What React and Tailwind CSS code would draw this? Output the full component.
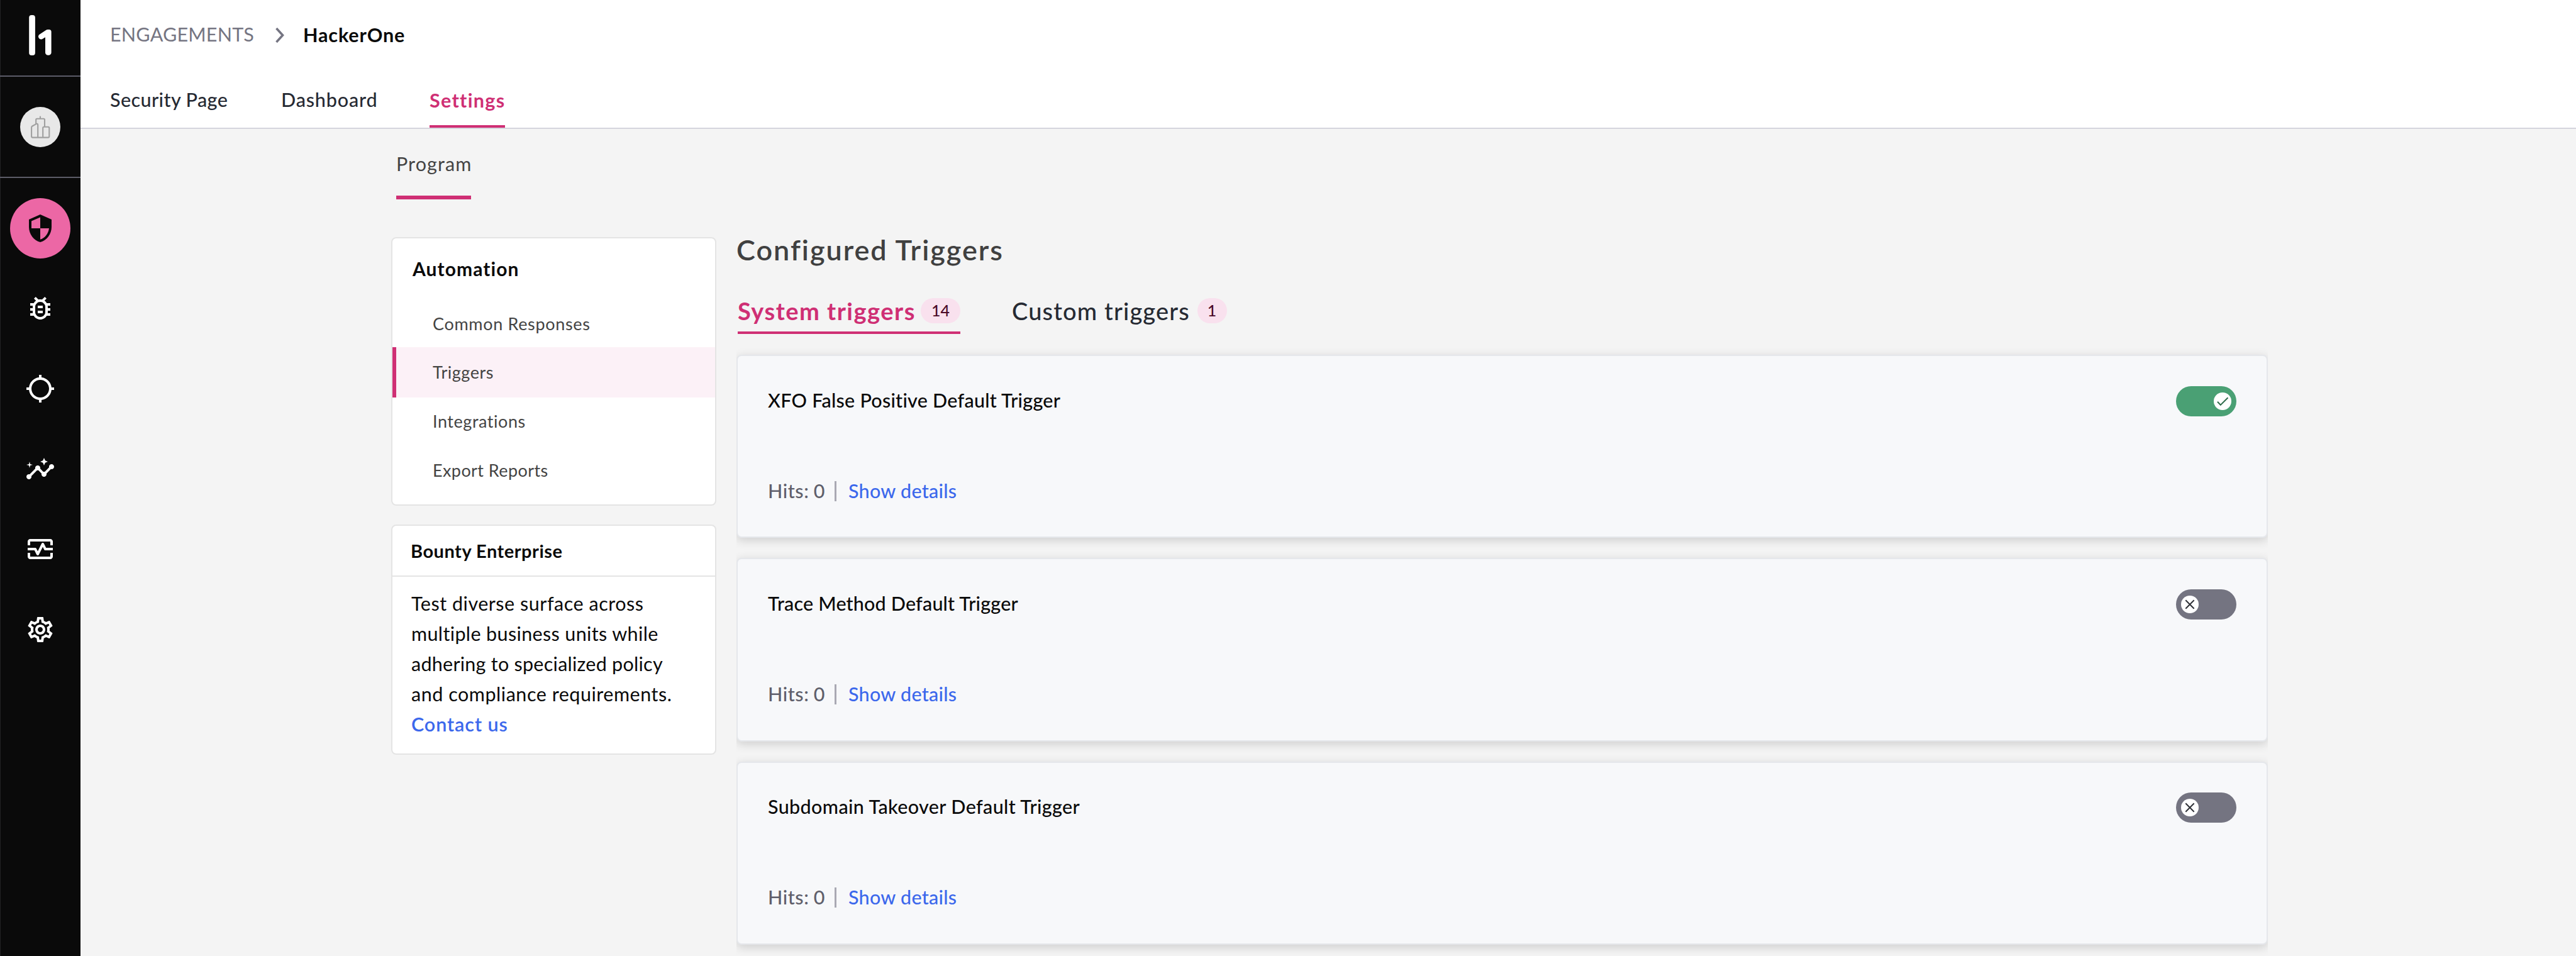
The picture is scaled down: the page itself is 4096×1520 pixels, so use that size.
import React from "react";
import {
  MdSecurity,
  MdOutlineBugReport,
  MdLocationSearching,
  MdInsights,
  MdOutlineMonitorHeart,
  MdOutlineSettings,
} from "react-icons/md";

const navIcons = [
  { name: "Engagements", Icon: MdSecurity, active: true },
  { name: "Reports", Icon: MdOutlineBugReport },
  { name: "Assets", Icon: MdLocationSearching },
  { name: "Insights", Icon: MdInsights },
  { name: "Monitoring", Icon: MdOutlineMonitorHeart },
  { name: "Settings", Icon: MdOutlineSettings },
];

const triggers = [
  { title: "XFO False Positive Default Trigger", hits: 0, on: true, spacing: "tracking-[0.25px]" },
  { title: "Trace Method Default Trigger", hits: 0, on: false, spacing: "tracking-[0.18px]" },
  { title: "Subdomain Takeover Default Trigger", hits: 0, on: false, spacing: "tracking-[0.37px]" },
];

function Logo() {
  return (
    <svg width="128" height="120" viewBox="0 0 128 120" fill="#fff">
      <rect x="46.2" y="23.9" width="9.7" height="64" rx="4" />
      <path d="M81.6 50.5V83.4a4.4 4.4 0 0 1-4.4 4.4h-.8a4.4 4.4 0 0 1-4.4-4.4V59.3l-4.6 2.6a4.4 4.4 0 0 1-5.8-1.6c-1.2-2-.6-4.3 1.2-5.5L73 47.9q1.4-1 3-1h2a3.6 3.6 0 0 1 3.6 3.6Z" />
    </svg>
  );
}

function Avatar() {
  return (
    <span className="flex size-16 rounded-full bg-[#e8e8e8]">
      <svg width="64" height="64" viewBox="0 0 64 64" fill="none" stroke="#a0a0a0" strokeWidth="2.1" strokeLinejoin="round" strokeLinecap="round">
        <path d="M32 15.5v3M25.2 27v-6.4a1.8 1.8 0 0 1 1.8-1.8h10.2a1.8 1.8 0 0 1 1.8 1.8V31" />
        <path d="M28.2 48.6V28.4a1.6 1.6 0 0 0-2.3-1.5L19.4 30.5a2.5 2.5 0 0 0-1.3 2.2V46.8a1.8 1.8 0 0 0 1.8 1.8H44.5a1.8 1.8 0 0 0 1.8-1.8V33.6a1.8 1.8 0 0 0-1.8-1.8H38a1.8 1.8 0 0 0-1.8 1.8V48.6" />
      </svg>
    </span>
  );
}

function Sidebar() {
  return (
    <aside className="flex w-32 shrink-0 flex-col border-l border-[#222224] bg-[#0a0a0a]">
      <div className="-ml-px h-[122px] border-b-2 border-[#5c5c68]">
        <Logo />
      </div>
      <div className="-ml-px flex h-[161px] items-center justify-center border-b-2 border-[#5c5c68]">
        <Avatar />
      </div>
      <nav className="-ml-px flex flex-col pt-4">
        {navIcons.map(({ name, Icon, active }) => (
          <a key={name} aria-label={name} className="flex h-[127.6px] items-center justify-center">
            <span
              className={
                active
                  ? "flex size-24 items-center justify-center rounded-full bg-[#ec67a5] text-[#0a0a0a]"
                  : "flex size-24 items-center justify-center text-white"
              }
            >
              <Icon className="size-12" />
            </span>
          </a>
        ))}
      </nav>
    </aside>
  );
}

function Header() {
  return (
    <header className="flex h-[205px] flex-col border-b-2 border-[#d5d5dd] bg-white pl-[47px]">
      <div className="flex h-[109px] items-center text-[30.5px]">
        <span className="w-[262px] text-[#757582] tracking-[0.22px]">ENGAGEMENTS</span>
        <svg className="mt-0.5" width="18" height="24" viewBox="0 0 18 24" fill="none" stroke="#757582" strokeWidth="3.6">
          <path d="M2.5 1l10 11-10 11" />
        </svg>
        <span className="ml-[27px] mt-0.5 font-bold text-[#0a0a0a] tracking-[0.87px]">HackerOne</span>
      </div>
      <nav className="flex h-[94px] gap-[84px] text-[30.5px] font-medium leading-[98px] text-[#262a33]">
        <a className="h-[94px] w-[188px] whitespace-nowrap tracking-[0.42px]">Security Page</a>
        <a className="h-[94px] w-[152px] tracking-[0.86px]">Dashboard</a>
        <a className="h-[94px] w-[120px] border-b-4 border-[#cf2f74] font-bold leading-[100px] text-[#cf2f74] tracking-[1.3px]">Settings</a>
      </nav>
    </header>
  );
}

function AutomationMenu() {
  return (
    <section className="h-[427px] rounded-lg border-2 border-[#e4e4e4] bg-white">
      <h2 className="flex h-[96.6px] items-center pl-8 text-[30px] font-bold text-[#0a0a0a] tracking-[1.07px]">Automation</h2>
      <ul className="text-[27px] leading-[77.75px] text-[#444444]">
        <li className="h-[77.75px] pl-16 tracking-[0.67px]">Common Responses</li>
        <li className="-my-px h-[79.75px] border-l-[6px] border-[#cf2f74] bg-[#fcf1f7] pl-[58px] leading-[79.75px] tracking-[0.52px]">Triggers</li>
        <li className="h-[77.75px] pl-16 tracking-[0.55px]">Integrations</li>
        <li className="h-[77.75px] pl-16 tracking-[0.41px]">Export Reports</li>
      </ul>
    </section>
  );
}

function PlanCard() {
  return (
    <section className="mt-[30px] h-[366px] rounded-lg border-2 border-[#e4e4e4] bg-white text-[#0a0a0a]">
      <h2 className="flex h-[81px] items-center border-b-2 border-[#e4e4e4] pl-[29px] text-[29px] font-bold tracking-[0.51px]">Bounty Enterprise</h2>
      <p className="flex flex-col pl-[30px] pt-[19px] text-[30.5px] leading-[47.86px]">
        <span className="tracking-[0.52px]">Test diverse surface across</span>
        <span className="tracking-[0.37px]">multiple business units while</span>
        <span className="tracking-[0.26px]">adhering to specialized policy</span>
        <span className="tracking-[0.53px]">and compliance requirements.</span>
        <a className="pt-px font-semibold text-[#3c68ec] tracking-[0.92px]">Contact us</a>
      </p>
    </section>
  );
}

function Toggle({ on }) {
  return (
    <span
      className={
        on
          ? "flex h-12 w-24 items-center justify-end rounded-full bg-[#4aa074] px-2"
          : "flex h-12 w-24 items-center rounded-full bg-[#747481] px-2"
      }
    >
      <span className="flex size-7 rounded-full bg-white">
        <svg width="28" height="28" viewBox="0 0 28 28" fill="none" strokeWidth="2">
          {on ? (
            <path d="M6 14.7l4.8 5.2L22.5 8.2" stroke="#2b6a48" />
          ) : (
            <path d="M7.3 7.3l13.4 13.4M20.7 7.3L7.3 20.7" stroke="#2e3036" />
          )}
        </svg>
      </span>
    </span>
  );
}

function TriggerCard({ title, hits, on, spacing }) {
  return (
    <article className="flex h-[291.1px] flex-col rounded-lg border-2 border-[#e5e7eb] bg-[#f7f8fa] px-12 pt-[47.5px] shadow-[0_4px_16px_rgba(0,0,0,0.16)]">
      <div className="flex h-12 items-center justify-between">
        <h3 className={`pb-0.5 text-[30.5px] font-medium text-[#0a0a0a] ${spacing}`}>{title}</h3>
        <Toggle on={on} />
      </div>
      <div className="mt-[94px] flex h-[50px] items-center text-[30.5px] font-medium">
        <span className="w-[106px] text-[#5f5f6b] tracking-[0.58px] [word-spacing:-1px]">Hits: {hits}</span>
        <span className="h-8 w-[3px] bg-[#a9a9b3]" />
        <a className="ml-[19px] text-[#3c68ec] tracking-[0.27px]">Show details</a>
      </div>
    </article>
  );
}

function Tabs() {
  return (
    <nav className="mt-11 flex h-[70px] gap-[82px] pl-0.5 text-[38px]">
      <a className="flex w-[354px] items-center justify-between border-b-4 border-[#cf2f74] font-bold text-[#cf2f74] tracking-[1.5px]">
        <span>System triggers</span>
        <span className="flex h-10 w-[63px] items-center justify-center rounded-full bg-[#f9e1ee] text-[25px] font-medium text-[#4b0a28] tracking-normal">14</span>
      </a>
      <a className="mb-1 flex w-[341.5px] items-center justify-between font-medium text-[#262a33] tracking-[1.14px]">
        <span>Custom triggers</span>
        <span className="flex h-10 w-[47px] items-center justify-center rounded-full bg-[#f9e1ee] text-[25px] font-medium text-[#4b0a28] tracking-normal">1</span>
      </a>
    </nav>
  );
}

export default function App() {
  return (
    <div className="flex h-[1520px] w-[4096px] overflow-hidden bg-[#f4f4f4] font-['Lato','Open_Sans',sans-serif]">
      <Sidebar />
      <div className="flex min-w-0 flex-1 flex-col">
        <Header />
        <main className="pl-[494px]">
          <div className="ml-2 flex h-[112px] w-[118.6px] items-center border-b-[6px] border-[#cf2f74] pt-[5px] text-[30.5px] text-[#444444] tracking-[1.09px]">Program</div>
          <div className="mt-[60px] flex gap-8">
            <aside className="w-[517px] shrink-0">
              <AutomationMenu />
              <PlanCard />
            </aside>
            <section className="w-[2434.5px]">
              <h1 className="h-10 text-[45px] font-semibold leading-10 text-[#404040] tracking-[1.97px]">Configured Triggers</h1>
              <Tabs />
              <div className="-mt-4 flex flex-col gap-[32px] overflow-x-clip pt-[49.4px]">
                {triggers.map((t) => (
                  <TriggerCard key={t.title} {...t} />
                ))}
              </div>
            </section>
          </div>
        </main>
      </div>
    </div>
  );
}
